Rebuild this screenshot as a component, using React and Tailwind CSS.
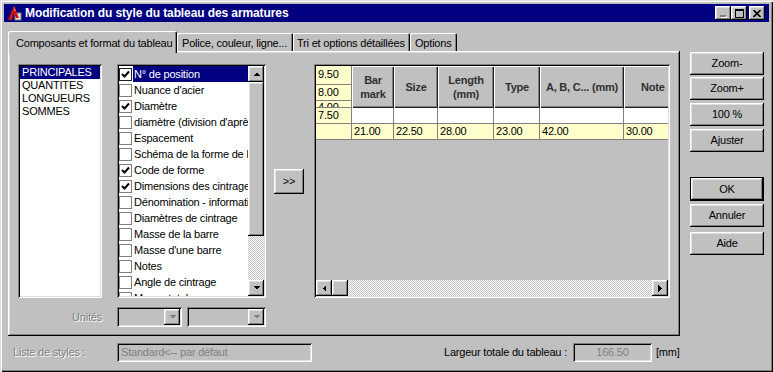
import React from "react";

const raised = "shadow-[inset_-1px_-1px_#000,inset_1px_1px_#fff,inset_-2px_-2px_#808080,inset_2px_2px_#dfdfdf]";
const sunken = "shadow-[inset_1px_1px_#808080,inset_-1px_-1px_#fff,inset_2px_2px_#000,inset_-2px_-2px_#dfdfdf]";
const dither = "[background-image:repeating-conic-gradient(#fff_0_25%,#c0c0c0_0_50%)] [background-size:2px_2px]";
const disabled = "text-[#808080] [text-shadow:1px_1px_0_#fff]";

function Arrow({ dir, grey }) {
  const pts = {
    up: "0,4 3.5,0.5 7,4",
    down: "0,0 7,0 3.5,3.5",
    left: "4,0 4,7 0.5,3.5",
    right: "0,0 0,7 3.5,3.5",
  }[dir];
  const w = dir === "up" || dir === "down" ? 7 : 4;
  const h = dir === "up" || dir === "down" ? 4 : 7;
  return (
    <svg width={w} height={h} viewBox={`0 0 ${w} ${h}`} shapeRendering="crispEdges">
      <polygon points={pts} fill={grey ? "#808080" : "#000"} />
    </svg>
  );
}

function ScrollBtn({ dir, grey }) {
  return (
    <div className={`w-[16px] h-[16px] shrink-0 bg-[#c0c0c0] flex items-center justify-center ${raised}`}>
      <Arrow dir={dir} grey={grey} />
    </div>
  );
}

function Check() {
  return (
    <svg width="9" height="9" viewBox="0 0 9 9">
      <polyline points="1,4 3.5,6.5 8,1.5" fill="none" stroke="#000" strokeWidth="2" />
    </svg>
  );
}

function CheckRow({ label, checked, selected }) {
  return (
    <div className="h-[16px] flex items-center shrink-0">
      <div className={`w-[13px] h-[13px] shrink-0 bg-white border flex items-center justify-center ${selected ? "border-[#202020]" : "border-[#808080]"}`}>
        {checked && <Check />}
      </div>
      <div className={`ml-[1px] h-[16px] flex-1 pl-[1px] flex items-center whitespace-nowrap overflow-hidden ${selected ? "bg-[#000080] text-white" : "text-black"}`}>
        {label}
      </div>
    </div>
  );
}

function Button({ children, className = "", def }) {
  if (def) {
    return (
      <div className={`border border-black ${className}`}>
        <div className={`h-full bg-[#c0c0c0] flex items-center justify-center ${raised}`}>{children}</div>
      </div>
    );
  }
  return (
    <div className={`bg-[#c0c0c0] flex items-center justify-center ${raised} ${className}`}>{children}</div>
  );
}

function Combo({ w }) {
  return (
    <div className={`h-[20px] bg-[#c0c0c0] p-[2px] flex justify-end ${sunken} ${w}`}>
      <div className={`w-[16px] h-[16px] flex items-center justify-center ${raised}`}>
        <Arrow dir="down" grey />
      </div>
    </div>
  );
}

const items = [
  ["N° de position", true],
  ["Nuance d'acier", false],
  ["Diamètre", true],
  ["diamètre (division d'après la norme)", false],
  ["Espacement", false],
  ["Schéma de la forme de barre", false],
  ["Code de forme", true],
  ["Dimensions des cintrages", true],
  ["Dénomination - information", false],
  ["Diamètres de cintrage", false],
  ["Masse de la barre", false],
  ["Masse d'une barre", false],
  ["Notes", false],
  ["Angle de cintrage", false],
  ["Masse totale", false],
];

const cols = [
  ["Bar", "mark", "w-[42px]", "21.00"],
  ["Size", null, "w-[44px]", "22.50"],
  ["Length", "(mm)", "w-[56px]", "28.00"],
  ["Type", null, "w-[46px]", "23.00"],
  ["A, B, C... (mm)", null, "w-[84px]", "42.00"],
  ["Note", null, "w-[60px]", "30.00"],
];

function Preview() {
  return (
    <div className={`w-[356px] h-[234px] bg-[#c0c0c0] p-[2px] flex flex-col ${sunken}`}>
      <div className="flex-1 overflow-hidden">
        <div className="flex w-[400px]">
          <div className="w-[36px] shrink-0 flex flex-col bg-[#ffffcc] border-r border-[#808080]">
            <div className="h-[19px] pl-[2px] border-b border-[#808080]">9.50</div>
            <div className="h-[16px] pl-[2px] border-b border-[#808080] flex items-center">8.00</div>
            <div className="h-[7px] pl-[2px] overflow-hidden leading-[13px] border-b border-[#808080]">4.00</div>
            <div className="h-[16px] pl-[2px] border-b border-[#808080] flex items-center">7.50</div>
            <div className="h-[16px] border-b border-[#808080]"></div>
          </div>
          {cols.map(([a, b, w, v]) => (
            <div key={a} className={`${w} shrink-0 flex flex-col`}>
              <div className={`h-[42px] bg-[#c0c0c0] flex flex-col items-center justify-center font-bold text-[#303030] leading-[14px] whitespace-nowrap ${a === "Note" ? "items-start pl-[17px]" : ""} shadow-[inset_1px_1px_#fff,inset_-1px_-1px_#202020,inset_-2px_-2px_#808080]`}>
                <span>{a}</span>
                {b && <span>{b}</span>}
              </div>
              <div className="h-[16px] bg-white border-r border-b border-[#808080]"></div>
              <div className="h-[16px] bg-[#ffffcc] border-r border-b border-[#808080] pl-[2px] flex items-center">{v}</div>
            </div>
          ))}
        </div>
      </div>
      <div className="h-[16px] flex">
        <ScrollBtn dir="left" />
        <div className={`w-[16px] h-[16px] bg-[#c0c0c0] ${raised}`}></div>
        <div className={`flex-1 ${dither}`}></div>
        <ScrollBtn dir="right" />
      </div>
    </div>
  );
}

export default function App() {
  return (
    <div className="w-[773px] h-[372px] bg-[#c0c0c0] p-[4px] text-[11px] tracking-[-0.2px] text-black font-['Liberation_Sans',Arial,sans-serif] shadow-[inset_1px_1px_#dfdfdf,inset_2px_2px_#fff,inset_-1px_-1px_#000,inset_-2px_-2px_#808080] overflow-hidden">
      {/* title bar */}
      <div className="h-[18px] bg-[#000080] flex items-center pl-[2px] pr-[4px]">
        <svg width="16" height="16" viewBox="0 0 16 16" className="shrink-0">
          <rect x="9" y="8" width="6" height="7" fill="#e0e0e0" stroke="#808080" strokeWidth="1" />
          <polygon points="2,15 8,1 13,13 10,13 8,8 6,15" fill="#d01010" />
          <polygon points="8,1 10,6 8,6" fill="#ff6060" />
        </svg>
        <span className="ml-[3px] text-white font-bold text-[12px] tracking-[-0.1px]">Modification du style du tableau des armatures</span>
        <div className="ml-auto flex items-center">
          <div className={`w-[16px] h-[14px] bg-[#c0c0c0] flex items-end justify-center pb-[3px] ${raised}`}>
            <div className="w-[6px] h-[2px] bg-[#808080] shadow-[1px_1px_#fff]"></div>
          </div>
          <div className={`w-[16px] h-[14px] bg-[#c0c0c0] flex items-center justify-center ${raised}`}>
            <div className="w-[9px] h-[9px] border border-black border-t-2"></div>
          </div>
          <div className={`ml-[2px] w-[16px] h-[14px] bg-[#c0c0c0] flex items-center justify-center ${raised}`}>
            <svg width="8" height="7" viewBox="0 0 8 7">
              <path d="M0.5 0 L7.5 7 M7.5 0 L0.5 7" stroke="#000" strokeWidth="1.6" />
            </svg>
          </div>
        </div>
      </div>

      <div className="flex">
        {/* left column */}
        <div className="ml-[4px] w-[672px]">
          {/* tabs */}
          <div className="mt-[9px] h-[20px] flex items-end">
            <div className="w-[169px] h-[22px] -mb-[2px] relative z-10 bg-[#c0c0c0] rounded-t-[2px] shadow-[inset_1px_1px_#fff,inset_-1px_0_#000,inset_-2px_0_#808080] pl-[8px] pt-[4px]">
              Composants et format du tableau
            </div>
            <div className="w-[116px] h-[18px] bg-[#c0c0c0] rounded-t-[2px] shadow-[inset_1px_1px_#fff,inset_-1px_0_#000,inset_-2px_0_#808080] pl-[5px] pt-[2px]">
              Police, couleur, ligne...
            </div>
            <div className="w-[117px] h-[18px] bg-[#c0c0c0] rounded-t-[2px] shadow-[inset_1px_1px_#fff,inset_-1px_0_#000,inset_-2px_0_#808080] pl-[4px] pt-[2px]">
              Tri et options détaillées
            </div>
            <div className="w-[47px] h-[18px] bg-[#c0c0c0] rounded-t-[2px] shadow-[inset_1px_1px_#fff,inset_-1px_0_#000,inset_-2px_0_#808080] pl-[5px] pt-[2px]">
              Options
            </div>
          </div>

          {/* tab panel */}
          <div className={`h-[285px] pt-[13px] pl-[10px] ${raised}`}>
            <div className="flex items-center">
              {/* category list */}
              <div className={`w-[84px] h-[234px] bg-white p-[2px] flex flex-col ${sunken}`}>
                <div className="h-[13px] leading-[13px] pl-[2px] bg-[#000080] text-white">PRINCIPALES</div>
                <div className="h-[13px] leading-[13px] pl-[2px]">QUANTITES</div>
                <div className="h-[13px] leading-[13px] pl-[2px]">LONGUEURS</div>
                <div className="h-[13px] leading-[13px] pl-[2px]">SOMMES</div>
              </div>

              {/* column checklist */}
              <div className={`ml-[15px] w-[149px] h-[234px] bg-white p-[2px] flex ${sunken}`}>
                <div className="flex-1 flex flex-col overflow-hidden">
                  {items.map(([l, c], i) => (
                    <CheckRow key={l} label={l} checked={c} selected={i === 0} />
                  ))}
                </div>
                <div className="w-[16px] flex flex-col">
                  <ScrollBtn dir="up" />
                  <div className={`h-[154px] bg-[#c0c0c0] ${raised}`}></div>
                  <div className={`flex-1 ${dither}`}></div>
                  <ScrollBtn dir="down" />
                </div>
              </div>

              <Button className="ml-[8px] w-[30px] h-[25px]">&gt;&gt;</Button>

              <div className="ml-[10px]">
                <Preview />
              </div>
            </div>

            {/* units */}
            <div className="mt-[9px] flex items-center">
              <div className={`w-[84px] text-right ${disabled}`}>Unités</div>
              <Combo w="ml-[15px] w-[65px]" />
              <Combo w="ml-[5px] w-[79px]" />
            </div>
          </div>

          {/* bottom row */}
          <div className="mt-[7px] h-[19px] flex items-center">
            <div className={`w-[109px] pl-[5px] ${disabled}`}>Liste de styles :</div>
            <div className={`w-[195px] h-[19px] pl-[4px] flex items-center text-[#808080] ${sunken}`}>Standard&lt;-- par défaut</div>
            <div className="w-[261px] text-right pr-[6px]">Largeur totale du tableau :</div>
            <div className={`w-[79px] h-[19px] flex items-center justify-center text-[#808080] ${sunken}`}>166.50</div>
            <div className="ml-[4px]">[mm]</div>
          </div>
        </div>

        {/* right buttons */}
        <div className="ml-[10px] mt-[30px] w-[74px] flex flex-col">
          <Button className="h-[23px]">Zoom-</Button>
          <Button className="mt-[2px] h-[23px]">Zoom+</Button>
          <Button className="mt-[3px] h-[23px]">100 %</Button>
          <Button className="mt-[3px] h-[23px]">Ajuster</Button>
          <Button def className="mt-[25px] h-[24px]">OK</Button>
          <Button className="mt-[3px] h-[23px]">Annuler</Button>
          <Button className="mt-[5px] h-[23px]">Aide</Button>
        </div>
      </div>
    </div>
  );
}
